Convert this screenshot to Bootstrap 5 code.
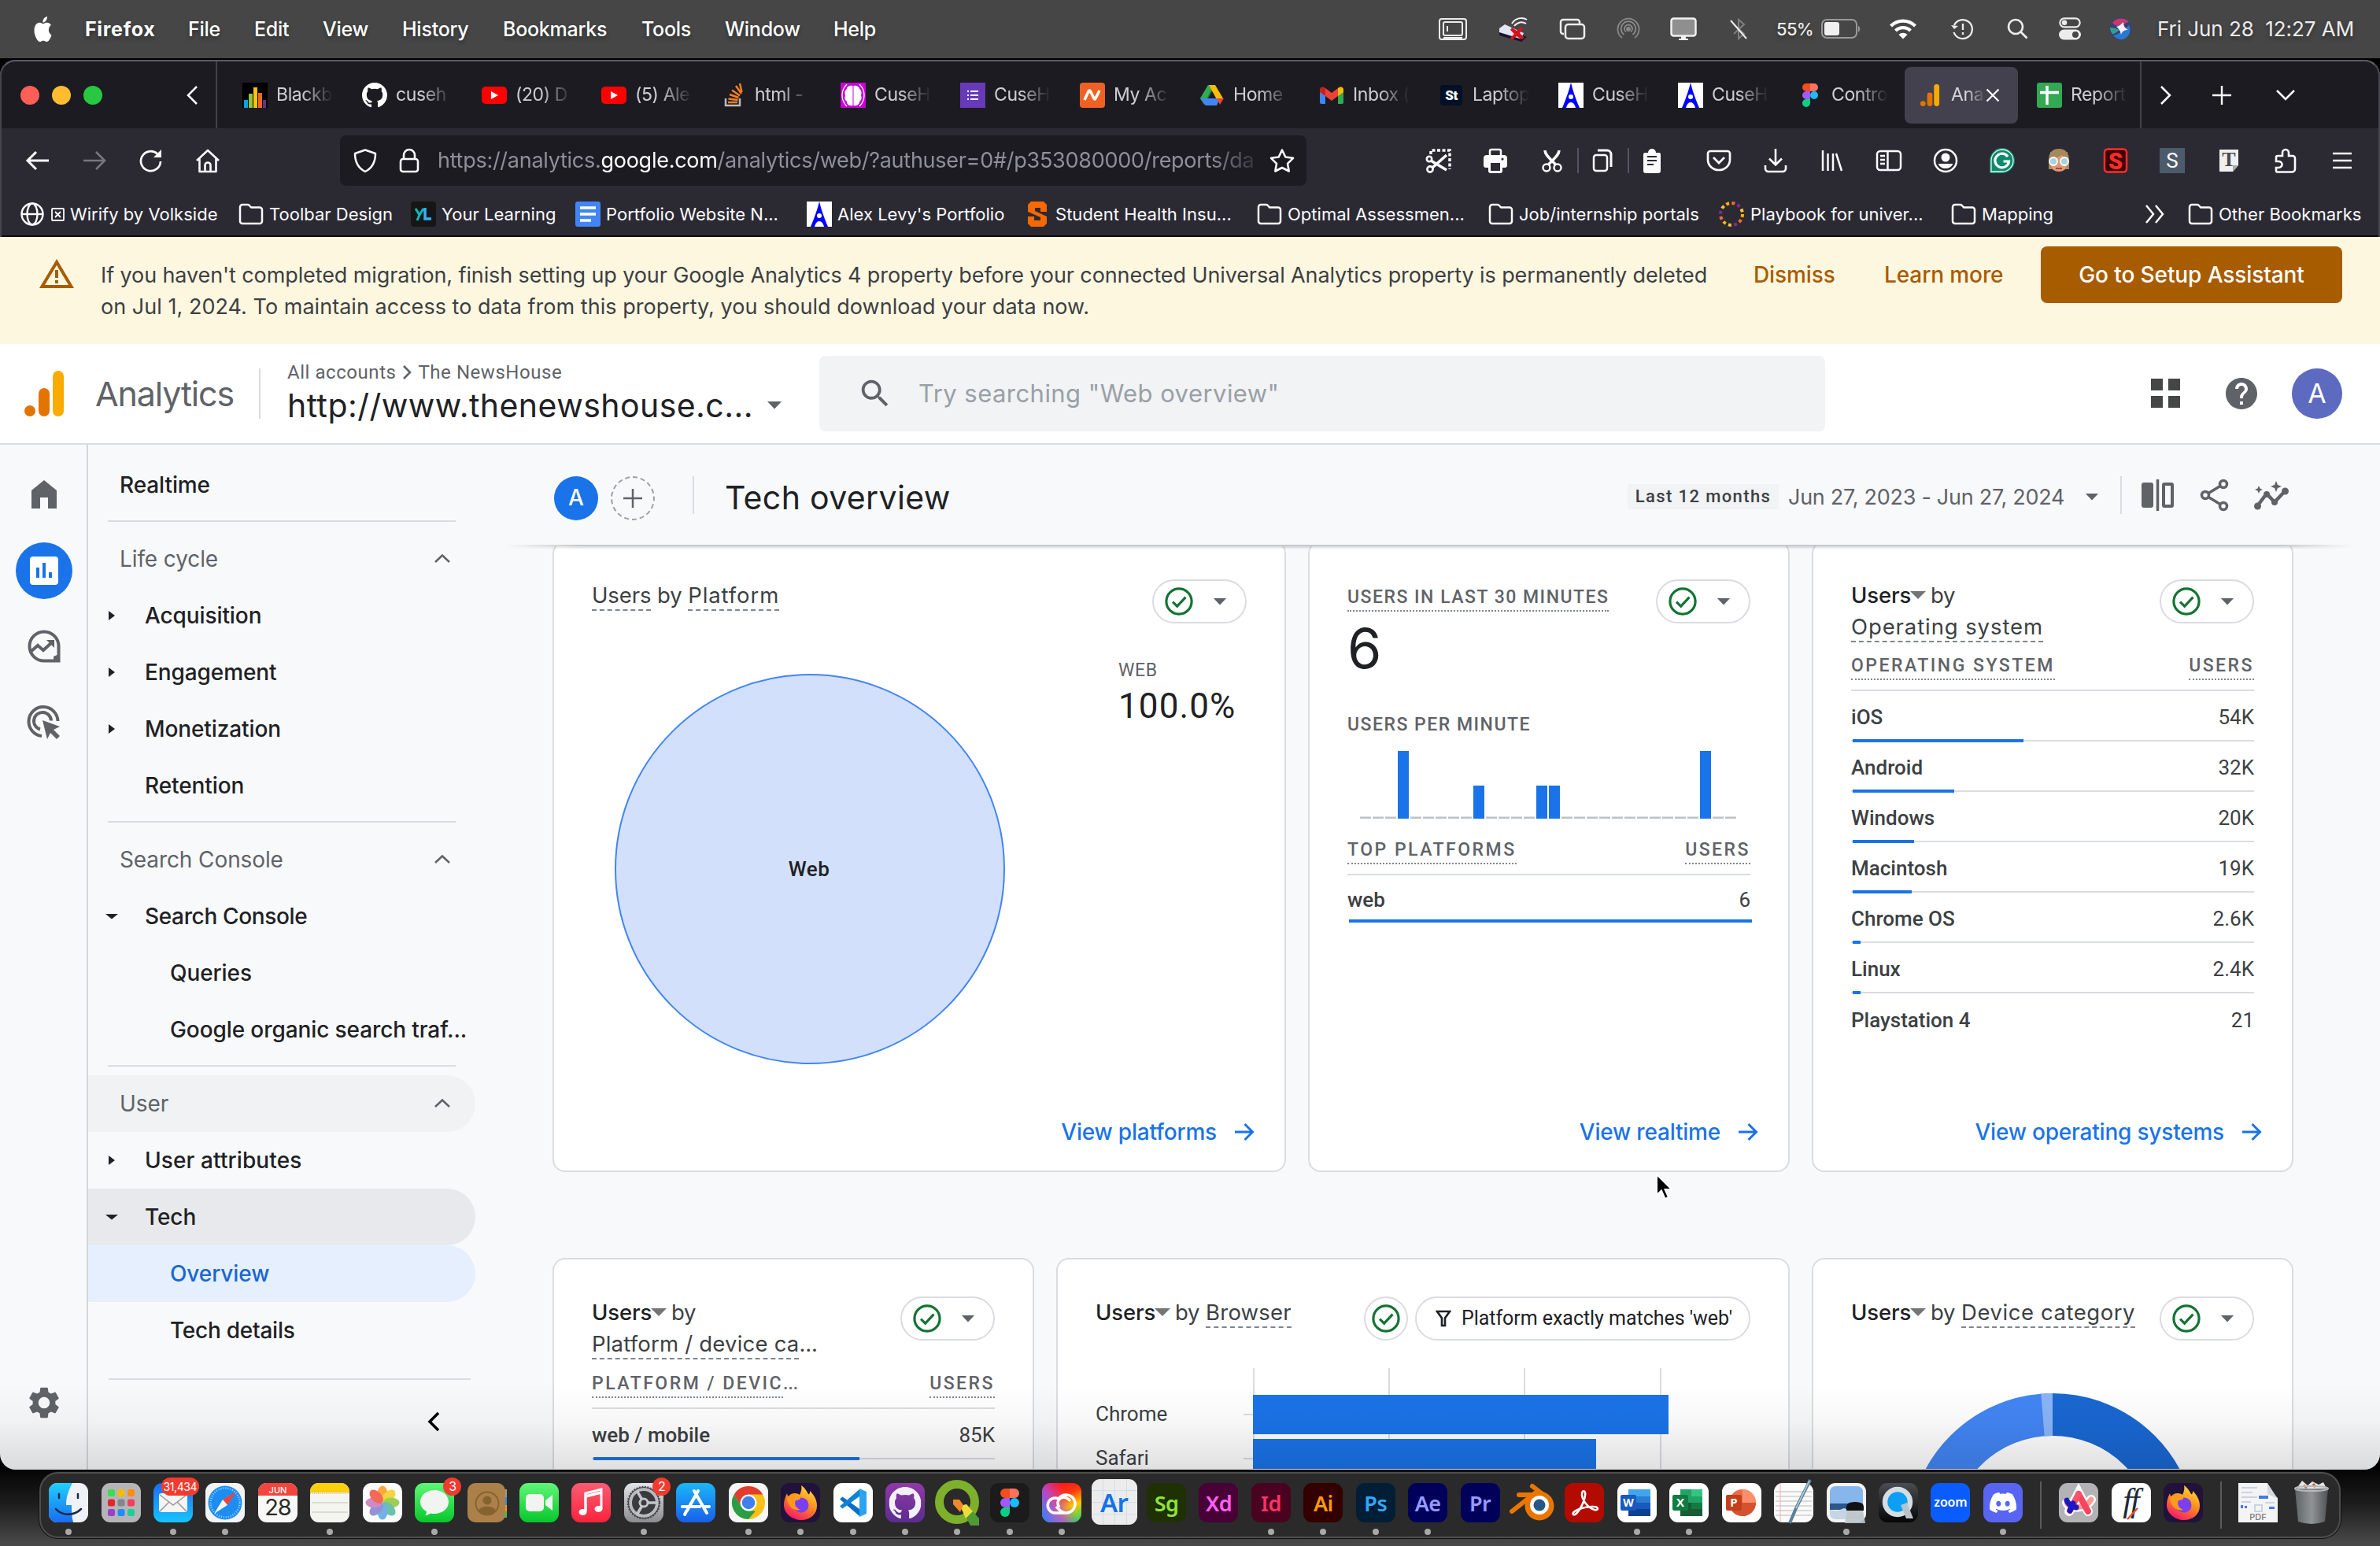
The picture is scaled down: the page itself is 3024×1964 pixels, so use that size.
<!DOCTYPE html>
<html lang="en">
<head>
<meta charset="utf-8">
<title>Tech overview - Analytics</title>
<link rel="stylesheet" href="https://cdn.jsdelivr.net/npm/bootstrap@5.3.0/dist/css/bootstrap.min.css">
<script src="https://cdn.jsdelivr.net/npm/bootstrap@5.3.0/dist/js/bootstrap.bundle.min.js"></script>
<style>
html,body{width:3024px;height:1964px;overflow:hidden}
body{background:#000;font-family:Inter,"Liberation Sans",sans-serif;color:#202124;line-height:1.3}
svg{display:block;flex:none}
.rb{font-family:Roboto,"Liberation Sans",sans-serif}
.slot{display:flex;align-items:center;justify-content:center;flex:none}

/* menu bar */
.menubar{height:74px;background:#464646;color:#fff;font-size:25px;font-weight:500;letter-spacing:-.25px;text-shadow:0 3px 5px rgba(0,0,0,.35)}
.menubar .mi{flex:none;white-space:nowrap}
.menus .mi:nth-child(1){width:70px;padding-left:41px}
.menus .mi:nth-child(2){width:131px;font-weight:700;margin-left:38px;letter-spacing:.7px}
.menus .mi:nth-child(3){width:84px}.menus .mi:nth-child(4){width:87px}.menus .mi:nth-child(5){width:101px}
.menus .mi:nth-child(6){width:128px}.menus .mi:nth-child(7){width:176px}.menus .mi:nth-child(8){width:106px}.menus .mi:nth-child(9){width:138px}
.status{width:1217px;color:#ececec}
.status .slot:nth-child(1){width:78px}.status .slot:nth-child(2){width:76px}.status .slot:nth-child(3){width:73px}
.status .slot{width:70px}
.status .batt{width:134px;justify-content:flex-start;padding-left:13px;font-size:22px;letter-spacing:-.7px;gap:10px}
.status .w80{width:80px}.status .w64{width:64px}
.clock{padding-left:15px;font-size:26px;white-space:pre;letter-spacing:-.05px;font-weight:400}

/* browser window */
.ff{height:1791px;margin-top:2px;border-radius:20px;overflow:hidden;background:#f8f9fb;position:relative;flex:none}
.ff-edge{position:absolute;inset:0;border:2px solid #5d5c63;border-bottom:0;border-radius:20px 20px 0 0;height:225px;border-left-color:#46454d;border-right-color:#46454d;pointer-events:none}
.tabs{height:87px;background:#1c1b22;color:#fbfbfe;padding-top:2px}
.lights{width:276px;border-right:2px solid #42414a;height:100%;padding-left:26px;padding-right:17px;gap:16px}
.lights i{width:24px;height:24px;border-radius:50%}
.tab{width:144px;height:72px;margin:0 4px;padding-left:16px;gap:11px;border-radius:8px;flex:none;font-size:23px;letter-spacing:-.4px;color:#fbfbfe}
.tab .tt{width:72px;white-space:nowrap;opacity:.8;-webkit-mask-image:linear-gradient(90deg,#000 45%,transparent 100%);mask-image:linear-gradient(90deg,#000 45%,transparent 100%)}
.tab.live{background:#42414d}
.tab.live .tt{width:44px}
.tabs-end{border-left:2px solid #42414a;height:100%;margin-left:-1px}
.tools{height:82px;background:#2b2a33;color:#fbfbfe;padding-left:12px}
.tools .slot{width:72px}
.urlbar{width:1228px;height:64px;background:#1c1b22;border-radius:8px;margin:0 132px;padding-left:16px;flex:none}
.urlbar .addr{width:1044px;margin-left:20px;margin-right:12px;font-size:27px;letter-spacing:-.27px;color:#8f8f9a;white-space:nowrap;-webkit-mask-image:linear-gradient(90deg,#000 94%,transparent 101%);mask-image:linear-gradient(90deg,#000 94%,transparent 101%)}
.urlbar b{color:#fbfbfe;font-weight:400}
.vr2{width:2px;height:32px;background:#55545f;flex:none}
.tools .w68{width:68px}.tools .w62{width:62px}.tools .w58{width:58px;margin-right:20px}
.marks{height:56px;background:#2b2a33;color:#fbfbfe;font-size:22px;letter-spacing:.02px;padding-left:26px;border-bottom:2px solid #0c0c0d}
.bm{display:flex;align-items:center;gap:7px;flex:none;white-space:nowrap}
.bm:nth-child(1){width:277px}.bm:nth-child(2){width:219px}.bm:nth-child(3){width:209px}.bm:nth-child(4){width:294px}
.bm:nth-child(5){width:278px}.bm:nth-child(6){width:294px}.bm:nth-child(7){width:294px}.bm:nth-child(8){width:292px}
.bm:nth-child(9){width:296px}.bm:nth-child(10){width:246px}.bm:nth-child(11){width:55px}

/* migration banner */
.notice{height:136px;background:#fef7e0;color:#3c4043;font-size:27px;line-height:40px;letter-spacing:-.105px;padding:12px 48px 0 49px}
.notice .msg{width:2060px;margin:17px 0 0 33px;white-space:nowrap}
.notice .msg span{letter-spacing:.03px}
.notice .act{color:#a85c00;font-weight:500;margin-top:16px;font-size:28px;letter-spacing:-.1px}
.notice .go{background:#a85c00;color:#fff;width:383px;height:72px;border-radius:8px;font-weight:500;font-size:28px;letter-spacing:-.1px;padding:0;border:0}

/* product header */
.gahead{height:128px;background:#fff;border-bottom:2px solid #dadce0;padding-left:31px}
.prod{font-size:43px;color:#5f6368;letter-spacing:-1.15px;width:208px;margin-left:40px;margin-top:2px}
.crumb{font-size:24px;color:#5f6368;letter-spacing:.55px;line-height:32px;gap:8px;padding-top:2px}
.acct{font-size:41px;line-height:50px;letter-spacing:.45px;width:609px;padding-top:1px}
.find{width:1278px;height:96px;border-radius:8px;background:#f1f3f4;color:#9aa0a6;font-size:31px;letter-spacing:.45px;padding-left:48px;gap:32px}
.avatar{border-radius:50%;color:#fff;display:flex;align-items:center;justify-content:center}
.me{width:64px;height:64px;background:#5c6bc0;font-size:34px}

/* left rail and report navigation */
.rail{width:112px;border-right:2px solid #d5d7da;color:#5f6368;flex:none;padding-top:28px}
.rail .ri{height:72px;width:72px;margin:0 auto 24px 20px;display:flex;align-items:center;justify-content:center;flex:none;border-radius:50%}
.rail .sel{background:#1a73e8;color:#fff}
.rail .cog{margin-top:769px}
.rnav{width:530px;font-size:28px;font-weight:500;letter-spacing:-.1px;padding-top:15px;flex:none}
.nl{height:72px;width:492px;border-radius:0 36px 36px 0;display:flex;align-items:center;padding-left:72px;position:relative;white-space:nowrap}
.nl.sec{padding-left:40px;color:#5f6368;font-weight:400}
.nl.sec svg{margin-left:auto;margin-right:31px}
.nl.sub{padding-left:104px}
.nl.top1{padding-left:40px}
.nl .tw{width:16px;position:absolute;left:22px}
.ndiv{height:2px;background:#dadce0;width:442px;margin:9px 0 11px 25px}
.hov1{background:#f1f2f4}.hov2{background:#e8e9ec}.cur{background:#e6effd;color:#1967d2}

/* report area */
.rhead{height:129px;padding-left:62px;position:relative;z-index:2;flex:none}
.rhead:after{content:"";position:absolute;left:0;right:34px;bottom:-4px;height:6px;background:linear-gradient(90deg,transparent,rgba(60,64,67,.3) 4%,rgba(60,64,67,.3) 96%,transparent);-webkit-mask-image:linear-gradient(#000,transparent);mask-image:linear-gradient(#000,transparent)}
.addc{width:56px;height:56px;border:2px dashed #9aa0a6;border-radius:50%}
.rt{font-size:41px;letter-spacing:.35px;margin-left:39px}
.last{background:#f1f3f4;font-size:22px;font-weight:500;letter-spacing:1.4px;width:192px;height:32px;color:#3c4043;white-space:nowrap}
.dates{font-size:27px;color:#5f6368;letter-spacing:-.27px;margin-left:12px;width:377px;white-space:nowrap}
.cards{padding-left:60px;overflow:hidden;height:1172px}
.crow{gap:28px}
.crow.r1{margin-top:-7px;height:802px}
.crow.r2{margin-top:109px;height:700px}
.gc{background:#fff;border:2px solid #dadce0;border-radius:16px;width:612px;padding:47px 48px 29px;display:flex;flex-direction:column;flex:none}
.gc.wide{width:932px}
.ct{font-size:27.5px;line-height:40px;letter-spacing:-.1px;color:#3c4043;white-space:nowrap}
.ct b{font-weight:500;color:#202124}
.ct .tv{display:inline-block;width:20px;height:10px;vertical-align:middle;margin:-6px -2px 0 -1px}
.dl{display:inline-block;line-height:36px;border-bottom:2px dashed #80868b}
.dl.l1{letter-spacing:.2px}.dl.l2{letter-spacing:.55px}.dl.l3{letter-spacing:.9px}
.chk{height:56px;border:2px solid #dadce0;border-radius:28px;display:flex;align-items:center;justify-content:center;flex:none;background:#fff}
.chk.d{width:120px;gap:25px;padding-left:14px;justify-content:flex-start}
.cap{font-size:23px;line-height:32px;color:#5f6368;letter-spacing:1.5px;font-weight:500;white-space:nowrap}
.cap .ul{display:inline-block;border-bottom:2px dotted #80868b}
.thead2{border-bottom:2px solid #dadce0;height:48px;display:flex;justify-content:space-between}
.cap.wd{letter-spacing:2.5px}
.tr2{height:64px;border-bottom:2px solid #dadce0;display:flex;align-items:center;justify-content:space-between;font-size:26px;color:#3c4043;position:relative;flex:none;padding-top:5px}
.tr2 span:first-child{font-weight:500}
.tr2 i{position:absolute;left:2px;bottom:-3px;height:4px;background:#1a73e8}
.more{margin-top:auto;display:flex;align-items:center;justify-content:flex-end;gap:22px;margin-right:-10px;color:#1a73e8;font-size:28px;font-weight:500;letter-spacing:-.2px;line-height:40px}
.fade-b{position:absolute;left:0;right:0;bottom:0;height:110px;background:linear-gradient(rgba(0,0,0,0),rgba(0,0,0,.03) 45%,rgba(0,0,0,.12));pointer-events:none;z-index:4}
.ptr{position:absolute;left:2103px;top:1414px;z-index:5}

/* dock */
.under{flex:1;background:linear-gradient(#050505,#1d1d1d 45%,#484848 96%);padding:3px 50px 0}
.dock{height:84px;background:#2a2a2a;border:2px solid #4e4e4e;border-radius:24px;padding:0 0 0 2px;box-shadow:0 0 0 1px #111}
.app{width:66.43px;height:80px;flex:none;display:flex;justify-content:center;padding-top:12px;position:relative}
.app.on:after{content:"";position:absolute;bottom:2px;width:8px;height:8px;border-radius:50%;background:#a9a9a9}
.tile{width:50px;height:50px;border-radius:11px;display:flex;align-items:center;justify-content:center;font-family:"Noto Sans","Open Sans",sans-serif;font-weight:600;font-size:27px;letter-spacing:-.5px;line-height:1}
.t-ar{width:58px;height:58px;margin-top:-5px;font-size:33px;color:#1473e6;background:repeating-linear-gradient(90deg,transparent 0 14px,#cfdcea 14px 15px),repeating-linear-gradient(#ececec 0 14px,#cfdcea 14px 15px)}
.t-sg{background:#1f3003;color:#8fe33a}.t-xd{background:#470137;color:#ff61f6}.t-id{background:#49021f;color:#ff3366}
.t-ai{background:#330000;color:#ff9a00}.t-ps{background:#001e36;color:#31a8ff}.t-ae,.t-pr{background:#00005b;color:#9999ff}
.t-zoom{background:#0b5cff;color:#fff;font-size:16px;letter-spacing:-.2px;padding-bottom:3px}
.cnt{position:absolute;background:#f23b30;color:#fff;border-radius:12px;font-size:16px;line-height:23px;height:23px;min-width:23px;text-align:center;top:5px;right:-1px;letter-spacing:-.4px}
.cnt.big{padding:0 3px;right:0;top:5px;font-size:14px}
.dsep{width:2px;height:60px;background:#5b5b5b;margin:0 14px;flex:none}
</style>
</head>
<body class="d-flex flex-column">
<svg width="0" height="0" class="position-absolute">
<defs>
<linearGradient id="gBlue" x1="0" y1="0" x2="0" y2="1"><stop offset="0" stop-color="#1fd0ff"/><stop offset="1" stop-color="#1a6cf0"/></linearGradient>
<linearGradient id="gMail" x1="0" y1="0" x2="0" y2="1"><stop offset="0" stop-color="#1b6cf5"/><stop offset="1" stop-color="#16c5fb"/></linearGradient>
<linearGradient id="gGreen" x1="0" y1="0" x2="0" y2="1"><stop offset="0" stop-color="#5ff777"/><stop offset="1" stop-color="#08c62b"/></linearGradient>
<linearGradient id="gRed" x1="0" y1="0" x2="0" y2="1"><stop offset="0" stop-color="#fb5c74"/><stop offset="1" stop-color="#fa233b"/></linearGradient>
<linearGradient id="gStore" x1="0" y1="0" x2="0" y2="1"><stop offset="0" stop-color="#1ab7f8"/><stop offset="1" stop-color="#1a5fe8"/></linearGradient>
<linearGradient id="gFox" x1=".8" y1="0" x2=".3" y2="1"><stop offset="0" stop-color="#ffe23a"/><stop offset=".5" stop-color="#ff8a1c"/><stop offset="1" stop-color="#f5156c"/></linearGradient>
<linearGradient id="gCC" x1=".3" y1="0" x2=".7" y2="1"><stop offset="0" stop-color="#ff0f1a"/><stop offset=".35" stop-color="#ff3a10"/><stop offset=".65" stop-color="#ffc400"/><stop offset="1" stop-color="#3fd85a"/></linearGradient>
<linearGradient id="gCC2" x1="1" y1=".3" x2="0" y2=".8"><stop offset=".3" stop-color="#c13bd8" stop-opacity="0"/><stop offset=".65" stop-color="#b44be0" stop-opacity=".8"/><stop offset="1" stop-color="#3b7bff"/></linearGradient>
<linearGradient id="gGray" x1="0" y1="0" x2="0" y2="1"><stop offset="0" stop-color="#e3e5e8"/><stop offset="1" stop-color="#8c8c90"/></linearGradient>
<linearGradient id="gQt" x1="0" y1="0" x2="0" y2="1"><stop offset="0" stop-color="#4a4d52"/><stop offset="1" stop-color="#050505"/></linearGradient>
<linearGradient id="gGit" x1="0" y1="0" x2="0" y2="1"><stop offset="0" stop-color="#8f3aa8"/><stop offset="1" stop-color="#5b2d8e"/></linearGradient>
<linearGradient id="gBin" x1="0" y1="0" x2="1" y2="0"><stop offset="0" stop-color="#5f6366"/><stop offset=".5" stop-color="#8f9497"/><stop offset="1" stop-color="#505356"/></linearGradient>
<symbol id="folder" viewBox="0 0 32 32"><path d="M2 7a3 3 0 0 1 3-3h6.500c1 0 1.700.3 2.300 1l2.400 2.600H27a3 3 0 0 1 3 3V25a3 3 0 0 1-3 3H5a3 3 0 0 1-3-3z" fill="none" stroke="#fbfbfe" stroke-width="2.500"/></symbol>
<symbol id="amark" viewBox="0 0 32 32"><path fill="#fff" d="M0 0h32v32H0z"/><path fill="#00f" fill-rule="evenodd" d="M16 0c2 8 5 18 11 32h-5c-1-4-3-7-6-7s-5 3-6 7H5C11 18 14 8 16 0zm0 15a3 3 0 1 0 0 6 3 3 0 0 0 0-6z"/></symbol>
<symbol id="yt" viewBox="0 0 32 32"><rect y="5" width="32" height="22" rx="5" fill="red"/><path fill="#fff" d="m12 11 9 5-9 5z"/></symbol>
<symbol id="github" viewBox="0 0 16 16"><path d="M8 0C3.58 0 0 3.58 0 8c0 3.54 2.29 6.53 5.47 7.59.4.07.55-.17.55-.38 0-.19-.01-.82-.01-1.49-2.01.37-2.53-.49-2.69-.94-.09-.23-.48-.94-.82-1.13-.28-.15-.68-.52-.01-.53.63-.01 1.08.58 1.23.82.72 1.21 1.87.87 2.33.66.07-.52.28-.87.51-1.07-1.78-.2-3.64-.89-3.64-3.95 0-.87.31-1.59.82-2.15-.08-.2-.36-1.02.08-2.12 0 0 .67-.21 2.2.82.64-.18 1.32-.27 2-.27s1.36.09 2 .27c1.53-1.04 2.2-.82 2.2-.82.44 1.1.16 1.92.08 2.12.51.56.82 1.27.82 2.15 0 3.07-1.87 3.75-3.65 3.95.29.25.54.73.54 1.48 0 1.07-.01 1.93-.01 2.2 0 .21.15.46.55.38A8.01 8.01 0 0 0 16 8c0-4.42-3.58-8-8-8z"/></symbol>
<symbol id="figma" viewBox="0 0 32 48"><path fill="#f24e1e" d="M16 0H8a8 8 0 0 0 0 16h8z"/><path fill="#ff7262" d="M16 0h8a8 8 0 0 1 0 16h-8z"/><path fill="#a259ff" d="M16 16H8a8 8 0 0 0 0 16h8z"/><circle cx="24" cy="24" r="8" fill="#1abcfe"/><path fill="#0acf83" d="M8 32h8v8a8 8 0 1 1-8-8z"/></symbol>
<symbol id="ga" viewBox="0 0 50 58"><rect x="36" width="14" height="58" rx="7" fill="#f9ab00"/><rect x="18" y="22" width="14" height="36" rx="7" fill="#e37400"/><circle cx="7" cy="51" r="7" fill="#e37400"/></symbol>
<symbol id="ok" viewBox="0 0 34 34"><circle cx="17" cy="17" r="15.200" fill="none" stroke="#137333" stroke-width="3"/><path d="m9.500 17.500 5.300 5.300L25 12" fill="none" stroke="#137333" stroke-width="3"/></symbol>
<symbol id="dn" viewBox="0 0 20 10"><path d="M1 0h18l-9 9.500z" fill="#5f6368"/></symbol>
<symbol id="tri" viewBox="0 0 20 10"><path d="M0 0h20l-10 10z" fill="#757575"/></symbol>
<symbol id="up" viewBox="0 0 22 14"><path d="m2 11 9-8.500L20 11" fill="none" stroke="#5f6368" stroke-width="2.500"/></symbol>
<symbol id="right" viewBox="0 0 16 16"><path d="m4 2 8 6-8 6z" fill="#202124"/></symbol>
<symbol id="down" viewBox="0 0 16 16"><path d="M0 5h16l-8 6.500z" fill="#202124"/></symbol>
<symbol id="arrow" viewBox="0 0 26 26"><path d="M1 13h22M13.500 3l10 10-10 10" fill="none" stroke="#1a73e8" stroke-width="3"/></symbol>
<symbol id="fox" viewBox="0 0 50 50"><rect width="50" height="50" rx="11" fill="#20123a"/><path fill="url(#gFox)" d="M26 3c6 4 7 8 9 11 2 1 2-2 2-4 6 6 9 12 9 19 0 11-9 18-20 18S4 39 4 28c0-6 2-11 4-15 0 2 1 3 2 4 2-3 4-4 8-4 3 0 5 1 6 2 2-4 3-8 2-12z"/><circle cx="26" cy="28" r="9.500" fill="#7b3ff2"/><path fill="#ff9a1f" d="M8 18c5-3 11-3 17 0 1 2-2 4-6 4-2 4-1 9 6 12-8 2-17-4-17-16z"/></symbol>
</defs>
</svg>

<header class="menubar d-flex align-items-center flex-shrink-0">
  <nav class="menus d-flex align-items-center">
    <span class="mi"><svg width="27" height="32" viewBox="0 0 16 16" preserveAspectRatio="none" fill="#fff"><path d="M11.182.008C11.148-.03 9.923.023 8.857 1.180c-1.066 1.156-.902 2.482-.878 2.516s1.520.087 2.475-1.258.762-2.391.728-2.430m3.314 11.733c-.048-.096-2.325-1.234-2.113-3.422s1.675-2.789 1.698-2.854-.597-.79-1.254-1.157a3.700 3.700 0 0 0-1.563-.434c-.108-.003-.483-.095-1.254.116-.508.139-1.653.589-1.968.607-.316.018-1.256-.522-2.267-.665-.647-.125-1.333.131-1.824.328-.49.196-1.422.754-2.074 2.237-.652 1.482-.311 3.830-.067 4.560s.625 1.924 1.273 2.796c.576.984 1.340 1.667 1.659 1.899s1.219.386 1.843.067c.502-.308 1.408-.485 1.766-.472.357.013 1.061.154 1.782.539.571.197 1.111.115 1.652-.105.541-.221 1.324-1.059 2.238-2.758q.52-1.185.473-1.282"/></svg></span>
    <span class="mi">Firefox</span><span class="mi">File</span><span class="mi">Edit</span><span class="mi">View</span><span class="mi">History</span><span class="mi">Bookmarks</span><span class="mi">Tools</span><span class="mi">Window</span><span class="mi">Help</span>
  </nav>
  <div class="status d-flex align-items-center ms-auto flex-shrink-0">
    <span class="slot"><svg width="36" height="28" viewBox="0 0 36 28" fill="none" stroke="#ececec" stroke-width="2"><rect x="1" y="1" width="34" height="26" rx="3"/><rect x="6" y="5" width="24" height="17" rx="2"/><path d="M11 10v7M6 25h24"/></svg></span>
    <span class="slot"><svg width="38" height="32" viewBox="0 0 38 32"><path d="M1 15 8 10l24 11-4 9-27-8z" fill="#e3e5f2"/><path d="M1 20l26 8 4-4 5 2-7 6L1 24z" fill="#15172c"/><path d="M17 9c4-7 13-9 19-5M20 12c4-5 10-6 15-3" fill="none" stroke="#f2f2f2" stroke-width="2"/><path d="m17 14 6 4 6-5 2 3-4 5 6 6-4 2-6-4-6 5-2-3 5-5-5-5z" fill="#d8101e"/></svg></span>
    <span class="slot"><svg width="34" height="28" viewBox="0 0 34 28" fill="none" stroke="#ececec" stroke-width="2.500"><path d="M6 20H5a3 3 0 0 1-3-3V5a3 3 0 0 1 3-3h18a3 3 0 0 1 3 3v2"/><rect x="8" y="8" width="24" height="18" rx="3.500"/></svg></span>
    <span class="slot"><svg width="30" height="30" viewBox="0 0 30 30" fill="none" stroke="#8a8a8a" stroke-width="1.800"><path d="M7 26a13.500 13.500 0 1 1 16 0M9.500 22a9.300 9.300 0 1 1 11 0M12 18.500a5 5 0 1 1 6 0"/><circle cx="15" cy="15" r="2" fill="#8a8a8a"/></svg></span>
    <span class="slot"><svg width="34" height="30" viewBox="0 0 34 30"><rect x="1.500" y="1.500" width="31" height="22" rx="3" fill="#8f8f8f" stroke="#f0f0f0" stroke-width="2.500"/><path fill="#f0f0f0" d="M14 24h6v3h3v2H11v-2h3z"/></svg></span>
    <span class="slot"><svg width="24" height="30" viewBox="0 0 24 30" fill="none"><path d="m6 9 13 12-7 6V3l7 6L6 21" stroke="#808080" stroke-width="2"/><path d="m2 4 20 23" stroke="#ececec" stroke-width="2"/></svg></span>
    <span class="slot batt">55%<svg width="50" height="26" viewBox="0 0 50 26"><rect x="1" y="1" width="44" height="23" rx="6" fill="none" stroke="#999" stroke-width="2"/><rect x="4" y="4" width="19" height="17" rx="3" fill="#f0f0f0"/><path d="M47 9c3 1 3 6 0 8z" fill="#999"/></svg></span>
    <span class="slot w80"><svg width="36" height="27" viewBox="0 0 36 27" fill="none" stroke="#fff" stroke-width="4.200"><path d="M2.500 10a22 22 0 0 1 31 0M8.500 16a13.500 13.500 0 0 1 19 0"/><path d="M18 26.500 12.500 21a8 8 0 0 1 11 0z" fill="#fff" stroke="none"/></svg></span>
    <span class="slot"><svg width="30" height="28" viewBox="0 0 30 28" fill="none" stroke="#ececec" stroke-width="2.300"><path d="M5 9a12 12 0 1 1-.5 9"/><path d="m1 9 4 5 5-4z" fill="#ececec" stroke="none"/><path d="M16 7v8M16 18v3"/></svg></span>
    <span class="slot"><svg width="27" height="27" viewBox="0 0 27 27" fill="none" stroke="#ececec" stroke-width="2.700"><circle cx="11" cy="11" r="9"/><path d="m17.500 17.500 8 8"/></svg></span>
    <span class="slot w64"><svg width="28" height="29" viewBox="0 0 28 29"><rect x="1.300" y="1.300" width="25.400" height="11" rx="5.500" fill="none" stroke="#ececec" stroke-width="2.200"/><circle cx="7" cy="6.800" r="3.300" fill="#ececec"/><rect y="15.500" width="28" height="13" rx="6.500" fill="#ececec"/><circle cx="21" cy="22" r="4" fill="#464646"/></svg></span>
    <span class="slot w64"><svg width="29" height="29" viewBox="0 0 29 29"><circle cx="14.500" cy="14.500" r="14" fill="#39406e"/><path d="M4 7C9 0 20 0 25 6c-5 1-10 5-14 5-3 0-5-2-7-4z" fill="#c33a72"/><path d="M5 23c5-1 12-5 20-13 4 8 0 15-7 18-5 1-10-1-13-5z" fill="#2a78d0"/><path d="M1 13c4 0 8 1 12 3-4 3-7 6-9 5-2-2-3-5-3-8z" fill="#2f9f95"/><path d="M9 12c4-1 7-4 9-6 0 5 2 8 6 10-5 0-8 2-9 6-1-5-3-8-6-10z" fill="#f5f1ff"/></svg></span>
    <span class="clock">Fri Jun 28  12:27 AM</span>
  </div>
</header>

<main class="ff d-flex flex-column">
  <div class="tabs d-flex align-items-center flex-shrink-0">
    <div class="lights d-flex align-items-center flex-shrink-0"><i style="background:#ff5f57"></i><i style="background:#febc2e"></i><i style="background:#28c840"></i>
      <svg class="ms-auto" width="24" height="26" viewBox="0 0 24 26" fill="none" stroke="#fbfbfe" stroke-width="2.500"><path d="M17 2 6 13l11 11"/></svg></div>
    <div class="d-flex align-items-center" style="margin-left:12px">
      <div class="tab d-flex align-items-center"><svg width="32" height="32" viewBox="0 0 32 32"><path d="M0 0h32v32H0z"/><path fill="#00a4e4" d="M2 22h5v10H2z"/><path fill="#8cc63f" d="M8 14h5v18H8z"/><path fill="#ffc20e" d="M14 6h5v26h-5z"/><path fill="#f26522" d="M20 13h5v19h-5z"/><path fill="#662d91" d="M26 22h4v10h-4z"/></svg><span class="tt">Blackb</span></div>
      <div class="tab d-flex align-items-center"><svg width="32" height="32" fill="#fff"><use href="#github"/></svg><span class="tt">cuseh</span></div>
      <div class="tab d-flex align-items-center"><svg width="32" height="32"><use href="#yt"/></svg><span class="tt">(20) D</span></div>
      <div class="tab d-flex align-items-center"><svg width="32" height="32"><use href="#yt"/></svg><span class="tt">(5) Ale</span></div>
      <div class="tab d-flex align-items-center"><svg width="32" height="32" viewBox="0 0 32 32" fill="none" stroke-width="2.500"><path stroke="#bcbbbb" d="M6 20v9h18v-9"/><path stroke="#f48024" d="M9 25h12M9.500 20.500l12 1.500M11 15l11.500 4M14 9.500l10 7M19 4l7 10M24 1l2.500 11"/></svg><span class="tt">html -</span></div>
      <div class="tab d-flex align-items-center"><svg width="32" height="32" viewBox="0 0 32 32"><path fill="#c800d7" d="M0 0h32v32H0z"/><path fill="#fff" d="M15.500 4v25C10 30 8 27 8 24c-3-2-3-5-2-8-1-3-1-6 2-8 0-3 4-5 7.500-4zM16.500 4v25c5.500 1 7.500-2 7.500-5 3-2 3-5 2-8 1-3 1-6-2-8 0-3-4-5-7.500-4z"/><path d="M8 2c-8 8-8 20 0 28M24 2c8 8 8 20 0 28" stroke="#fff" stroke-width="1.300" fill="none"/></svg><span class="tt">CuseH</span></div>
      <div class="tab d-flex align-items-center"><svg width="32" height="32" viewBox="0 0 32 32"><path fill="#673ab7" d="M0 0h32v32H0z"/><path d="M9 11h2M9 16h2M9 21h2M13 11h10M13 16h10M13 21h10" stroke="#fff" stroke-width="2"/></svg><span class="tt">CuseH</span></div>
      <div class="tab d-flex align-items-center"><svg width="32" height="32" viewBox="0 0 32 32"><rect width="32" height="32" rx="4" fill="#ee6123"/><path d="M6 22l5-11q1-2 2.500 0l4.500 9q1 2 2 0l5-10" fill="none" stroke="#fff" stroke-width="3.500"/></svg><span class="tt">My Ac</span></div>
      <div class="tab d-flex align-items-center"><svg width="32" height="32" viewBox="0 0 32 32"><path fill="#188038" d="M11 3h5l3 5-7 13-6 7-5-8z"/><path fill="#34a853" d="M11 3h6l-2 6L6 27l-5-7z"/><path fill="#fbbc04" d="M12 3h8l10 17h-9z"/><path fill="#1c1b22" d="m16 11 5 9H11z"/><path fill="#4285f4" d="M6 20h20l-4 9H9q-2 0-3-2l-5-7z"/><path fill="#ea4335" d="M22 20h9l-5 8z"/></svg><span class="tt">Home</span></div>
      <div class="tab d-flex align-items-center"><svg width="32" height="32" viewBox="0 0 32 32"><path fill="#4285f4" d="M1 8l7 5v14H3q-2 0-2-2z"/><path fill="#34a853" d="M31 8l-7 5v14h5q2 0 2-2z"/><path fill="#fbbc04" d="M24 7c4-3 7-1 7 2v3l-7 5z"/><path fill="#c5221f" d="M8 7C4 4 1 6 1 9v3l7 5z"/><path fill="#ea4335" d="M8 7l8 6 8-6v10l-8 6-8-6z"/></svg><span class="tt">Inbox (</span></div>
      <div class="tab d-flex align-items-center"><svg width="32" height="32" viewBox="0 0 32 32"><rect x="2" y="3" width="28" height="26" rx="4" fill="#001127"/><text x="16" y="22" font-family="Roboto" font-weight="900" font-size="17" fill="#fff" text-anchor="middle">St</text></svg><span class="tt">Laptop</span></div>
      <div class="tab d-flex align-items-center"><svg width="32" height="32"><use href="#amark"/></svg><span class="tt">CuseH</span></div>
      <div class="tab d-flex align-items-center"><svg width="32" height="32"><use href="#amark"/></svg><span class="tt">CuseH</span></div>
      <div class="tab d-flex align-items-center"><svg width="32" height="30"><use href="#figma"/></svg><span class="tt">Contro</span></div>
      <div class="tab live d-flex align-items-center"><svg width="32" height="28"><use href="#ga"/></svg><span class="tt">Ana</span><svg width="18" height="18" viewBox="0 0 18 18" stroke="#fbfbfe" stroke-width="2.200" style="margin-left:-11px"><path d="m1.500 1.500 15 15M16.500 1.500l-15 15"/></svg></div>
      <div class="tab d-flex align-items-center"><svg width="32" height="32" viewBox="0 0 32 32"><rect width="32" height="32" rx="3" fill="#34a853"/><path d="M13 4v24M4 12.500h24" stroke="#fff" stroke-width="3.500"/></svg><span class="tt">Report</span></div>
    </div>
    <div class="tabs-end d-flex align-items-center"><span class="slot" style="width:61px"><svg width="24" height="26" viewBox="0 0 24 26" fill="none" stroke="#fbfbfe" stroke-width="2.500"><path d="m6 2 11 11L6 24"/></svg></span><span class="slot" style="width:82px"><svg width="26" height="26" viewBox="0 0 26 26" stroke="#fbfbfe" stroke-width="2.400"><path d="M13 1v24M1 13h24"/></svg></span><span class="slot" style="width:80px"><svg width="28" height="18" viewBox="0 0 28 18" fill="none" stroke="#fbfbfe" stroke-width="2.500"><path d="m3 3 11 11L25 3"/></svg></span></div>
  </div>

  <div class="tools d-flex align-items-center flex-shrink-0">
    <span class="slot"><svg width="32" height="32" viewBox="0 0 32 32" fill="none" stroke="#fbfbfe" stroke-width="3"><path d="M3 16h27M14 5 3 16l11 11"/></svg></span>
    <span class="slot"><svg width="32" height="32" viewBox="0 0 32 32" fill="none" stroke="#77767f" stroke-width="2.600"><path d="M29 16H2M18 5l11 11-11 11"/></svg></span>
    <span class="slot"><svg width="32" height="32" viewBox="0 0 32 32" fill="none" stroke="#fbfbfe" stroke-width="2.700"><path d="M28 17a12.500 12.500 0 1 1-4-9.500"/><path d="M29 2v10H19z" fill="#fbfbfe" stroke="none"/></svg></span>
    <span class="slot"><svg width="32" height="32" viewBox="0 0 32 32" fill="none" stroke="#fbfbfe" stroke-width="2.600" stroke-linejoin="round"><path d="M2 16 16 3l14 13M5.500 13.500V30h21V13.500M12.500 30v-8a3.500 3.500 0 0 1 7 0v8"/></svg></span>
    <div class="urlbar d-flex align-items-center">
      <svg width="32" height="32" viewBox="0 0 32 32" fill="none" stroke="#fbfbfe" stroke-width="2.500" stroke-linejoin="round"><path d="M16 2.500 3 7c0 10 3 18 13 23 10-5 13-13 13-23z"/></svg>
      <svg width="32" height="32" viewBox="0 0 32 32" fill="none" stroke="#fbfbfe" stroke-width="2.600" style="margin-left:24px"><rect x="5" y="14" width="22" height="16" rx="3"/><path d="M9 14V9a7 7 0 0 1 14 0v5"/></svg>
      <span class="addr">https://analytics.<b>google.com</b>/analytics/web/?authuser=0#/p353080000/reports/da</span>
      <svg width="34" height="32" viewBox="0 0 34 32" fill="none" stroke="#fbfbfe" stroke-width="2.600" stroke-linejoin="round"><path d="m17 2.500 4.300 9 9.700 1.300-7 7 1.700 9.700L17 25l-8.700 4.500L10 19.800l-7-7 9.700-1.300z"/></svg>
    </div>
    <span class="slot"><svg width="34" height="32" viewBox="0 0 34 32" fill="none" stroke="#fbfbfe" stroke-width="2.600"><path d="M7 8V3h24v24" stroke-dasharray="4 2.500" stroke-width="3.500"/><circle cx="5" cy="14" r="3.200"/><circle cx="6" cy="27" r="3.600"/><path d="m7 16 20 12M9 25 27 9" stroke-width="3.600"/></svg></span>
    <span class="slot"><svg width="32" height="32" viewBox="0 0 32 32"><path fill="none" stroke="#fbfbfe" stroke-width="2.500" d="M9 10V4a2 2 0 0 1 2-2h10a2 2 0 0 1 2 2v6"/><path fill="#fbfbfe" fill-rule="evenodd" d="M5 9h22a4 4 0 0 1 4 4v9a3 3 0 0 1-3 3h-3v4a3 3 0 0 1-3 3H10a3 3 0 0 1-3-3v-4H4a3 3 0 0 1-3-3v-9a4 4 0 0 1 4-4zm5 10v10h12V19zm15-6.500a1.600 1.600 0 1 0 0 3.200 1.600 1.600 0 0 0 0-3.200z"/></svg></span>
    <span class="slot w68"><svg width="26" height="30" viewBox="0 0 26 30" fill="none" stroke="#fbfbfe" stroke-width="2.500" style="margin-left:4px"><circle cx="6" cy="24" r="4.500"/><circle cx="20" cy="24" r="4.500"/><path d="M4 2c0 6 7 11 13.500 18M22 2c0 6-7 11-13.500 18" stroke-width="3.500"/></svg></span>
    <span class="vr2"></span>
    <span class="slot w62"><svg width="28" height="30" viewBox="0 0 28 30" fill="none" stroke="#fbfbfe" stroke-width="2.500"><rect x="2" y="8" width="17" height="20" rx="3"/><path d="M7 2h12a5 5 0 0 1 5 5v16" stroke-width="3"/></svg></span>
    <span class="vr2"></span>
    <span class="slot w58"><svg width="24" height="32" viewBox="0 0 24 32"><path fill="#fbfbfe" d="M3 6h4a5 5 0 0 1 10 0h4a2 2 0 0 1 2 2v21a3 3 0 0 1-3 3H4a3 3 0 0 1-3-3V8a2 2 0 0 1 2-2z"/><path d="M6 11h12M6 16h12M6 21h8" stroke="#2b2a33" stroke-width="2.200"/></svg></span>
    <span class="slot"><svg width="32" height="30" viewBox="0 0 32 30" fill="none" stroke="#fbfbfe" stroke-width="2.700"><path d="M5 3h22a3 3 0 0 1 3 3v8a14 13 0 0 1-28 0V6a3 3 0 0 1 3-3z"/><path d="m9 11 7 7 7-7"/></svg></span>
    <span class="slot"><svg width="30" height="32" viewBox="0 0 30 32" fill="none" stroke="#fbfbfe" stroke-width="2.600"><path d="M15 1v20M7 13.500l8 8 8-8M2 22v4a4 4 0 0 0 4 4h18a4 4 0 0 0 4-4v-4"/></svg></span>
    <span class="slot"><svg width="30" height="30" viewBox="0 0 30 30" fill="none" stroke="#fbfbfe" stroke-width="2.500"><path d="M3 2v26M9.500 6v22M16 6v22M20 6l7 22"/></svg></span>
    <span class="slot"><svg width="34" height="28" viewBox="0 0 34 28" fill="none" stroke="#fbfbfe" stroke-width="2.500"><rect x="2" y="2" width="30" height="24" rx="4"/><path d="M15.500 2v24M6 8h6M6 13h6M6 18h6"/></svg></span>
    <span class="slot"><svg width="32" height="32" viewBox="0 0 32 32"><circle cx="16" cy="16" r="14" fill="none" stroke="#fbfbfe" stroke-width="2.500"/><circle cx="16" cy="12" r="5.500" fill="#fbfbfe"/><path d="M6.500 20h19a10.500 10.500 0 0 1-19 0z" fill="#fbfbfe"/></svg></span>
    <span class="slot"><svg width="34" height="32" viewBox="0 0 34 32"><path fill="#0e8a6d" d="M17 0a16 16 0 1 1 0 32H1V16A16 16 0 0 1 17 0z"/><path fill="none" stroke="#e6f5f1" stroke-width="1.300" d="M17 2a14 14 0 1 1 0 28H3V16A14 14 0 0 1 17 2z"/><path d="M24 11a8.800 8.800 0 1 0 1.500 6h-7" fill="none" stroke="#fff" stroke-width="3.200"/></svg></span>
    <span class="slot"><svg width="34" height="32" viewBox="0 0 34 32"><path fill="#a8875a" d="M17 1c9 0 13 6 13 14v12h-5V12H9v15H4V15C4 7 8 1 17 1z"/><path fill="#a8875a" d="M6 5h22v8H6z"/><path fill="#dd9b77" d="M7 14c6-1 11-3 14-5 2 2 4 4 6 5v8c0 5-5 8-10 8S7 27 7 22z"/><circle cx="10" cy="17" r="5" fill="#a6d3e0" stroke="#fff" stroke-width="1.800"/><circle cx="24" cy="17" r="5" fill="#a6d3e0" stroke="#fff" stroke-width="1.800"/><path d="M13 26h8" stroke="#b8404a" stroke-width="2"/></svg></span>
    <span class="slot"><svg width="32" height="32" viewBox="0 0 32 32"><rect x="2" y="1.500" width="28" height="29" rx="4" fill="#3a0000" stroke="#ff2c2c" stroke-width="2.500"/><text x="16" y="26.500" font-family="Roboto" font-weight="900" font-size="29" fill="#ff2c2c" text-anchor="middle">S</text></svg></span>
    <span class="slot"><svg width="32" height="32" viewBox="0 0 32 32"><path fill="#4c5b6b" d="M0 0h32v32H0z"/><text x="16" y="25" font-family="Roboto" font-size="26" fill="#fff" text-anchor="middle">S</text></svg></span>
    <span class="slot"><svg width="26" height="30" viewBox="0 0 26 30"><path fill="#f0f0f0" d="M1 1h24v20l-7 8H1z"/><path fill="#aaa" d="M18 29v-8h7z"/><text x="13" y="22" font-family="Liberation Serif" font-weight="700" font-size="26" fill="#4a4a4a" text-anchor="middle">T</text></svg></span>
    <span class="slot"><svg width="30" height="32" viewBox="0 0 30 32" fill="none" stroke="#fbfbfe" stroke-width="2.600"><path d="M4 30.500h19a4 4 0 0 0 4-4V13a3 3 0 0 0-3-3h-5V6a4 4 0 0 0-8 0v4H5a2 2 0 0 0-2 2v5h3a4 3.500 0 0 1 0 8H3v4a1.500 1.500 0 0 0 1 1.500z"/></svg></span>
    <span class="slot"><svg width="26" height="24" viewBox="0 0 26 24" stroke="#fbfbfe" stroke-width="2.500"><path d="M1 3h24M1 12h24M1 21h24"/></svg></span>
  </div>

  <div class="marks d-flex align-items-center flex-shrink-0">
    <span class="bm"><svg width="32" height="32" viewBox="0 0 32 32" fill="none" stroke="#fbfbfe" stroke-width="2.400"><circle cx="15" cy="16" r="13.500"/><ellipse cx="15" cy="16" rx="6.500" ry="13.500"/><path d="M2 16h26"/></svg><svg width="17" height="17" viewBox="0 0 17 17" fill="none" stroke="#fbfbfe" stroke-width="1.800"><rect x="1" y="1" width="15" height="15" rx="1"/><path d="m5 5 7 7M12 5l-7 7"/></svg><span>Wirify by Volkside</span></span>
    <span class="bm"><svg width="32" height="32"><use href="#folder"/></svg><span>Toolbar Design</span></span>
    <span class="bm"><svg width="32" height="32" viewBox="0 0 32 32"><rect width="32" height="32" rx="4" fill="#161616"/><path d="m6 9 5 8 5-8M11 17l-3 7" fill="none" stroke="#08bdba" stroke-width="3"/><path d="M18 8v14h8" fill="none" stroke="#33b1ff" stroke-width="3.500"/></svg><span>Your Learning</span></span>
    <span class="bm"><svg width="32" height="32" viewBox="0 0 32 32"><rect width="32" height="32" rx="3" fill="#4285f4"/><path d="M6 8h20M6 16h20M6 24h14" stroke="#fff" stroke-width="3.600"/></svg><span>Portfolio Website N...</span></span>
    <span class="bm"><svg width="32" height="32"><use href="#amark"/></svg><span>Alex Levy's Portfolio</span></span>
    <span class="bm"><svg width="31" height="32" viewBox="0 0 29 32"><path fill="#f76900" d="M6 0h16l4 4v9h-8V8h-7v4l15 7v9l-4 4H6l-4-4v-9h8v5h8v-4L2 13V4z"/></svg><span>Student Health Insu...</span></span>
    <span class="bm"><svg width="32" height="32"><use href="#folder"/></svg><span>Optimal Assessmen...</span></span>
    <span class="bm"><svg width="32" height="32"><use href="#folder"/></svg><span>Job/internship portals</span></span>
    <span class="bm"><svg width="34" height="32" viewBox="0 0 34 32" fill="none" stroke-width="4"><circle cx="17" cy="16" r="14" stroke="#f5b400" stroke-dasharray="4 25.300" /><circle cx="17" cy="16" r="14" stroke="#f26b3a" stroke-dasharray="4 25.300" stroke-dashoffset="-7.300"/><circle cx="17" cy="16" r="14" stroke="#7b2d8e" stroke-dasharray="4 25.300" stroke-dashoffset="-14.600"/><circle cx="17" cy="16" r="14" stroke="#ffc233" stroke-dasharray="4 25.300" stroke-dashoffset="-22"/></svg><span>Playbook for univer...</span></span>
    <span class="bm"><svg width="32" height="32"><use href="#folder"/></svg><span>Mapping</span></span>
    <span class="bm"><svg width="26" height="26" viewBox="0 0 26 26" fill="none" stroke="#fbfbfe" stroke-width="2.500"><path d="m2 2 9 11-9 11M14 2l9 11-9 11"/></svg></span>
    <span class="bm"><svg width="32" height="32"><use href="#folder"/></svg><span>Other Bookmarks</span></span>
  </div>

  <section class="notice d-flex align-items-start flex-shrink-0">
    <svg width="46" height="40" viewBox="0 0 46 40" fill="none" stroke="#a85c00" stroke-width="4" style="margin-top:15px"><path d="M23 5 4.500 36h37z"/><path d="M23 15v10M23 28v4"/></svg>
    <div class="msg">If you haven't completed migration, finish setting up your Google Analytics 4 property before your connected Universal Analytics property is permanently deleted<br><span>on Jul 1, 2024. To maintain access to data from this property, you should download your data now.</span></div>
    <span class="act" style="margin-left:40px;width:166px">Dismiss</span>
    <span class="act">Learn more</span>
    <button class="btn go ms-auto" type="button">Go to Setup Assistant</button>
  </section>

  <section class="gahead d-flex align-items-center flex-shrink-0">
    <svg width="50" height="58"><use href="#ga"/></svg>
    <span class="prod">Analytics</span>
    <span class="vr2" style="height:64px;background:#dadce0"></span>
    <div style="margin-left:34px;margin-top:-6px">
      <div class="crumb rb d-flex align-items-center">All accounts<svg width="12" height="20" viewBox="0 0 12 20" fill="none" stroke="#5f6368" stroke-width="2.600"><path d="m2 2 8 8-8 8"/></svg>The NewsHouse</div>
      <div class="acct d-flex align-items-center"><span>http://www.thenewshouse.c...</span></div>
    </div>
    <svg width="20" height="10" style="margin-top:30px"><use href="#dn"/></svg>
    <div class="find d-flex align-items-center" style="margin-left:47px"><svg width="46" height="46" viewBox="0 0 24 24" fill="#5f6368"><path d="M15.500 14h-.79l-.28-.27C15.410 12.590 16 11.110 16 9.500 16 5.910 13.090 3 9.500 3S3 5.910 3 9.500 5.910 16 9.500 16c1.610 0 3.090-.59 4.230-1.570l.27.28v.79l5 4.990L20.490 19l-4.990-5zm-6 0C7.010 14 5 11.990 5 9.500S7.010 5 9.500 5 14 7.010 14 9.500 11.990 14 9.500 14z"/></svg><span>Try searching "Web overview"</span></div>
    <svg class="ms-auto" width="38" height="38" viewBox="0 0 38 38" fill="#444746"><path d="M0 0h15v15H0zM22 0h15v15H22zM0 22h15v15H0zM22 22h15v15H22z"/></svg>
    <svg width="48" height="48" viewBox="0 0 24 24" fill="#5f6368" style="margin:0 40px 0 53px"><path d="M12 2C6.480 2 2 6.480 2 12s4.480 10 10 10 10-4.480 10-10S17.520 2 12 2zm1 17h-2v-2h2v2zm2.070-7.750l-.9.92C13.450 12.900 13 13.500 13 15h-2v-.5c0-1.100.45-2.100 1.170-2.830l1.240-1.260c.37-.36.59-.86.59-1.410 0-1.100-.9-2-2-2s-2 .9-2 2H8c0-2.210 1.790-4 4-4s4 1.790 4 4c0 .88-.36 1.680-.93 2.250z"/></svg>
    <span class="avatar me" style="margin-right:48px">A</span>
  </section>

  <div class="d-flex flex-grow-1">
    <aside class="rail d-flex flex-column">
      <span class="ri"><svg width="38" height="40" viewBox="0 0 38 40" fill="currentColor"><path d="M3 14 19 1l16 13v23H24V23H14v14H3z"/></svg></span>
      <span class="ri sel"><svg width="38" height="38" viewBox="0 0 38 38"><rect x="1" y="1" width="36" height="36" rx="4" fill="#fff"/><path d="M11 15v13M19 9v19M27 21v7" stroke="#1a73e8" stroke-width="4"/></svg></span>
      <span class="ri"><svg width="42" height="42" viewBox="0 0 42 42"><path d="M21 2.500A18.500 18.500 0 1 0 21 39.500h18.500V21A18.500 18.500 0 0 0 21 2.500z" fill="none" stroke="#5f6368" stroke-width="4"/><path d="M33 40V34l7-3v9z" fill="#5f6368"/><path d="m5 27 8-7 7 6 11-10" fill="none" stroke="#5f6368" stroke-width="4"/><path d="M24 13h10v10z" fill="#5f6368"/></svg></span>
      <span class="ri"><svg width="44" height="44" viewBox="0 0 44 44" fill="none" stroke="#5f6368" stroke-width="4"><path d="M19 40A18.500 18.500 0 1 1 39.500 21"/><path d="M17 31.500a11 11 0 1 1 14-11"/><path d="m20 20 22 8-8 4 8 8-4 4-8-8-4 8z" fill="#5f6368" stroke="none"/></svg></span>
      <span class="ri cog"><svg width="48" height="48" viewBox="0 0 24 24" fill="currentColor"><path d="M19.140 12.940c.04-.3.06-.61.06-.94 0-.32-.02-.64-.07-.94l2.030-1.580c.18-.14.23-.41.12-.61l-1.920-3.320c-.12-.22-.37-.29-.59-.22l-2.390.96c-.5-.38-1.030-.7-1.620-.94l-.36-2.540c-.04-.24-.24-.41-.48-.41h-3.840c-.24 0-.43.17-.47.41l-.36 2.540c-.59.24-1.130.57-1.620.94l-2.390-.96c-.22-.08-.47 0-.59.22L2.740 8.870c-.12.21-.08.47.12.61l2.030 1.580c-.05.3-.09.63-.09.94s.02.64.07.94l-2.030 1.580c-.18.14-.23.41-.12.61l1.920 3.320c.12.22.37.29.59.22l2.390-.96c.5.38 1.030.7 1.620.94l.36 2.540c.05.24.24.41.48.41h3.840c.24 0 .44-.17.47-.41l.36-2.540c.59-.24 1.130-.56 1.620-.94l2.390.96c.22.08.47 0 .59-.22l1.920-3.320c.12-.22.07-.47-.12-.61l-2.010-1.580zM12 15.600c-1.980 0-3.600-1.620-3.600-3.600s1.620-3.600 3.600-3.600 3.600 1.620 3.600 3.600-1.620 3.600-3.600 3.600z"/></svg></span>
    </aside>

    <nav class="rnav">
      <div class="nl top1">Realtime</div>
      <div class="ndiv"></div>
      <div class="nl sec">Life cycle<svg width="22" height="14"><use href="#up"/></svg></div>
      <div class="nl"><svg class="tw" height="16"><use href="#right"/></svg>Acquisition</div>
      <div class="nl"><svg class="tw" height="16"><use href="#right"/></svg>Engagement</div>
      <div class="nl"><svg class="tw" height="16"><use href="#right"/></svg>Monetization</div>
      <div class="nl">Retention</div>
      <div class="ndiv"></div>
      <div class="nl sec">Search Console<svg width="22" height="14"><use href="#up"/></svg></div>
      <div class="nl" style="letter-spacing:-.35px"><svg class="tw" height="16"><use href="#down"/></svg>Search Console</div>
      <div class="nl sub">Queries</div>
      <div class="nl sub">Google organic search traf...</div>
      <div class="ndiv"></div>
      <div class="nl sec hov1">User<svg width="22" height="14"><use href="#up"/></svg></div>
      <div class="nl" style="letter-spacing:.1px"><svg class="tw" height="16"><use href="#right"/></svg>User attributes</div>
      <div class="nl hov2"><svg class="tw" height="16"><use href="#down"/></svg>Tech</div>
      <div class="nl sub cur">Overview</div>
      <div class="nl sub" style="letter-spacing:-.25px">Tech details</div>
      <div class="ndiv" style="width:460px;margin:25px 0 39px 26px"></div>
      <svg width="18" height="28" viewBox="0 0 18 28" fill="none" stroke="#000" stroke-width="3.500" style="margin-left:430px"><path d="M15 3 4 14l11 11"/></svg>
    </nav>

    <section class="flex-grow-1">
      <div class="rhead d-flex align-items-center">
        <span class="avatar" style="width:56px;height:56px;background:#1a73e8;font-size:28px;font-weight:500;margin-top:6px">A</span>
        <span class="addc slot" style="margin-left:16px;margin-top:6px"><svg width="24" height="24" viewBox="0 0 24 24" stroke="#5f6368" stroke-width="2.500"><path d="M12 0v24M0 12h24"/></svg></span>
        <span class="vr2" style="margin-left:48px;height:48px;background:#dadce0;margin-top:-2px"></span>
        <span class="rt" style="margin-top:7px">Tech overview</span>
        <span class="last rb slot ms-auto" style="margin-top:3px">Last 12 months</span>
        <span class="dates" style="margin-top:5px">Jun 27, 2023 - Jun 27, 2024</span>
        <svg width="18" height="9" style="margin-top:3px"><use href="#dn"/></svg>
        <span class="vr2" style="margin-left:27px;height:48px;background:#dadce0;margin-top:-2px"></span>
        <svg width="42" height="40" viewBox="0 0 42 40" style="margin-left:25px;margin-top:-1px"><rect y="4" width="15" height="32" rx="3" fill="#5f6368"/><path d="M20.500 0v40" stroke="#5f6368" stroke-width="3.500"/><rect x="28" y="6" width="11" height="28" rx="1" fill="none" stroke="#5f6368" stroke-width="4"/></svg>
        <svg width="38" height="42" viewBox="0 0 38 42" fill="none" stroke="#5f6368" stroke-width="3.500" style="margin-left:32px;margin-top:-1px"><path d="M30 7 7 21l23 14"/><g fill="#f8f9fb"><circle cx="30" cy="7" r="4.500"/><circle cx="7" cy="21" r="4.500"/><circle cx="30" cy="35" r="4.500"/></g></svg>
        <svg width="44" height="38" viewBox="0 0 44 38" fill="#5f6368" style="margin-left:31px;margin-right:116px;margin-top:-1px"><path d="m4 33 12-16 10 11 14-15" fill="none" stroke="#5f6368" stroke-width="4.500"/><circle cx="4.500" cy="33" r="4.500"/><circle cx="16" cy="18" r="4"/><circle cx="26" cy="28" r="4"/><circle cx="39.500" cy="14" r="4.500"/><path d="m28 1 2 5 5 2-5 2-2 5-2-5-5-2 5-2zM6 7l1.500 3.500L11 12l-3.500 1.500L6 17l-1.500-3.500L1 12l3.500-1.500z"/></svg>
      </div>

      <div class="cards">
        <div class="crow r1 d-flex">
          <article class="gc wide">
            <div class="d-flex justify-content-between"><div class="ct"><span class="dl">Users</span> by <span class="dl l3">Platform</span></div><span class="chk d"><svg width="36" height="36"><use href="#ok"/></svg><svg width="18" height="9"><use href="#dn"/></svg></span></div>
            <div class="d-flex" style="margin-top:45px">
              <svg width="500" height="500" viewBox="0 0 500 500" style="margin:17px 0 0 27px"><circle cx="250" cy="250" r="247" fill="#d2e0fc" stroke="#4285f4" stroke-width="2"/><text x="249" y="259" font-family="Roboto" font-weight="500" font-size="26" letter-spacing=".5" fill="#202124" text-anchor="middle">Web</text></svg>
              <div class="rb" style="margin-left:142px"><div style="font-size:23px;line-height:30px;color:#5f6368;letter-spacing:.6px">WEB</div><div style="font-size:44px;line-height:60px;color:#202124;letter-spacing:1.1px">100.0%</div></div>
            </div>
            <div class="more">View platforms<svg width="26" height="26"><use href="#arrow"/></svg></div>
          </article>

          <article class="gc">
            <div class="d-flex justify-content-between"><div><div class="cap rb" style="margin-top:7px"><span class="ul">USERS IN LAST 30 MINUTES</span></div><div style="font-size:70px;line-height:72px;margin-top:11px;font-weight:400">6</div></div><span class="chk d"><svg width="36" height="36"><use href="#ok"/></svg><svg width="18" height="9"><use href="#dn"/></svg></span></div>
            <div class="cap rb" style="margin-top:45px">USERS PER MINUTE</div>
            <svg width="480" height="86" viewBox="0 0 480 86" style="margin:17px 0 0 16px"><path d="M0 85h480" stroke="#bdc1c6" stroke-width="3" stroke-dasharray="14 2"/><path fill="#1a73e8" d="M48 0h14v86H48zM144 44h14v42h-14zM224 44h14v42h-14zM240 44h14v42h-14zM432 0h14v86h-14z"/></svg>
            <div class="thead2 cap wd rb" style="margin-top:24px"><span class="ul align-self-start">TOP PLATFORMS</span><span class="ul align-self-start">USERS</span></div>
            <div class="tr2 rb border-0" style="height:59px"><span>web</span><span>6</span><i style="width:100%;bottom:-1px"></i></div>
            <div class="more">View realtime<svg width="26" height="26"><use href="#arrow"/></svg></div>
          </article>

          <article class="gc">
            <div class="d-flex justify-content-between"><div class="ct"><b>Users</b><svg class="tv"><use href="#tri"/></svg> by<br><span class="dl l3">Operating system</span></div><span class="chk d"><svg width="36" height="36"><use href="#ok"/></svg><svg width="18" height="9"><use href="#dn"/></svg></span></div>
            <div class="thead2 cap wd rb" style="margin-top:14px"><span class="ul align-self-start">OPERATING SYSTEM</span><span class="ul align-self-start">USERS</span></div>
            <div class="tr2 rb"><span>iOS</span><span>54K</span><i style="width:217px"></i></div>
            <div class="tr2 rb"><span>Android</span><span>32K</span><i style="width:129px"></i></div>
            <div class="tr2 rb"><span>Windows</span><span>20K</span><i style="width:78px"></i></div>
            <div class="tr2 rb"><span>Macintosh</span><span>19K</span><i style="width:75px"></i></div>
            <div class="tr2 rb"><span>Chrome OS</span><span>2.6K</span><i style="width:10px"></i></div>
            <div class="tr2 rb"><span>Linux</span><span>2.4K</span><i style="width:10px"></i></div>
            <div class="tr2 rb border-0"><span>Playstation 4</span><span>21</span></div>
            <div class="more">View operating systems<svg width="26" height="26"><use href="#arrow"/></svg></div>
          </article>
        </div>

        <div class="crow r2 d-flex">
          <article class="gc">
            <div class="d-flex justify-content-between"><div class="ct"><b>Users</b><svg class="tv"><use href="#tri"/></svg> by<br><span class="dl l1">Platform / device ca</span>...</div><span class="chk d"><svg width="36" height="36"><use href="#ok"/></svg><svg width="18" height="9"><use href="#dn"/></svg></span></div>
            <div class="thead2 cap wd rb" style="margin-top:15px"><span><span class="ul">PLATFORM / DEVIC</span><span style="letter-spacing:0">...</span></span><span class="ul align-self-start">USERS</span></div>
            <div class="tr2 rb"><span>web / mobile</span><span>85K</span><i style="width:338px"></i></div>
          </article>

          <article class="gc wide">
            <div class="d-flex"><div class="ct"><b>Users</b><svg class="tv"><use href="#tri"/></svg> by <span class="dl l1">Browser</span></div>
              <span class="chk ms-auto" style="width:56px"><svg width="36" height="36"><use href="#ok"/></svg></span>
              <span class="chk rb" style="width:426px;margin-left:9px;font-size:25px;gap:13px;letter-spacing:-.04px;padding-left:3px"><svg width="20" height="22" viewBox="0 0 20 22" fill="none" stroke="#202124" stroke-width="2.600"><path d="M2 2h16l-6 8.500V20H8v-9.500z"/></svg>Platform exactly matches 'web'</span></div>
            <svg width="832" height="150" viewBox="0 0 832 150" style="margin-top:35px"><path d="M201 0v150M373 0v150M545 0v150M718 0v150M188 59h12M188 115h12" stroke="#dadce0" stroke-width="2"/><path fill="#1a73e8" d="M200 34h528v50H200zM200 90h436v50H200z"/><g font-family="Roboto" font-size="26" fill="#3c4043"><text x="0" y="67">Chrome</text><text x="0" y="123">Safari</text></g></svg>
          </article>

          <article class="gc">
            <div class="d-flex justify-content-between"><div class="ct"><b>Users</b><svg class="tv"><use href="#tri"/></svg> by <span class="dl l2">Device category</span></div><span class="chk d"><svg width="36" height="36"><use href="#ok"/></svg><svg width="18" height="9"><use href="#dn"/></svg></span></div>
            <svg width="512" height="200" viewBox="0 0 512 200" style="margin-top:67px" fill="none" stroke-width="54"><path stroke="#4285f4" d="M99.500 183.500A156.500 156.500 0 0 1 256 27"/><path stroke="#1967d2" d="M256 27A156.500 156.500 0 0 1 412.500 183.500"/><path stroke="#8ab4f8" d="M243.500 27.500A156.500 156.500 0 0 1 256 27"/></svg>
          </article>
        </div>
      </div>
    </section>
  </div>
  <div class="fade-b"></div>
  <svg class="ptr" width="22" height="36" viewBox="0 0 22 36"><path d="M2 2v26l6-5.500 4.500 10.500 4.500-2-4.500-10H21z" fill="#000" stroke="#fff" stroke-width="2"/></svg>
  <div class="ff-edge"></div>
</main>

<footer class="under">
  <div class="dock d-flex align-items-center">
    <div class="app on"><svg width="50" height="50" viewBox="0 0 50 50"><rect width="50" height="50" rx="11" fill="#eef1f5"/><path fill="url(#gBlue)" d="M11 0h19c-5 9-8 18-8 28h7c0 8 0 15 2 22H11A11 11 0 0 1 0 39V11A11 11 0 0 1 11 0z"/><path d="M13 14v5M37 14v5M9 33c8 9 23 9 32 0" fill="none" stroke="#1b2a44" stroke-width="2.500" stroke-linecap="round"/></svg></div>
    <div class="app"><svg width="50" height="50" viewBox="0 0 50 50"><rect width="50" height="50" rx="11" fill="#b5b5b8"/><g><rect x="8" y="8" width="9" height="9" rx="2.500" fill="#3ddc54"/><rect x="20.500" y="8" width="9" height="9" rx="2.500" fill="#fbb900"/><rect x="33" y="8" width="9" height="9" rx="2.500" fill="#ff8c0a"/><rect x="8" y="20.500" width="9" height="9" rx="2.500" fill="#e2272b"/><rect x="20.500" y="20.500" width="9" height="9" rx="2.500" fill="#84868b"/><rect x="33" y="20.500" width="9" height="9" rx="2.500" fill="#fa3d5a"/><rect x="8" y="33" width="9" height="9" rx="2.500" fill="#9a3fd0"/><rect x="20.500" y="33" width="9" height="9" rx="2.500" fill="#1a8ff5"/><rect x="33" y="33" width="9" height="9" rx="2.500" fill="#19cf95"/></g></svg></div>
    <div class="app on"><svg width="50" height="50" viewBox="0 0 50 50"><rect width="50" height="50" rx="11" fill="url(#gMail)"/><rect x="7" y="13" width="36" height="24" rx="3" fill="#f4f4f4"/><path d="m8 15 17 13 17-13M8 36l12-12M42 36 30 24" fill="none" stroke="#9a9a9a" stroke-width="1.500"/></svg><span class="cnt big">31,434</span></div>
    <div class="app on"><svg width="50" height="50" viewBox="0 0 50 50"><rect width="50" height="50" rx="11" fill="#f3f3f5"/><circle cx="25" cy="25" r="21.500" fill="#1d8df2"/><circle cx="25" cy="25" r="18.500" fill="none" stroke="#9fd4ff" stroke-width="2.500" stroke-dasharray="1 2"/><path d="M39 11 22 21l6 7z" fill="#f0443a"/><path d="M11 39 22 21l6 7z" fill="#f4f4f4"/></svg></div>
    <div class="app"><svg width="50" height="50" viewBox="0 0 50 50"><rect width="50" height="50" rx="11" fill="#f8f8f6"/><path d="M0 16v-5A11 11 0 0 1 11 0h28a11 11 0 0 1 11 11v5z" fill="#f2453d"/><text x="25" y="13" font-family="Inter" font-size="11" font-weight="500" fill="#fff" text-anchor="middle">JUN</text><text x="25" y="41" font-family="Inter" font-size="29" fill="#2a2a2a" text-anchor="middle" letter-spacing="-1">28</text></svg></div>
    <div class="app on"><svg width="50" height="50" viewBox="0 0 50 50"><rect width="50" height="50" rx="11" fill="#f5f5f0"/><path d="M0 12v-1A11 11 0 0 1 11 0h28a11 11 0 0 1 11 11v1z" fill="#fdcf0a"/><path d="M0 13h50" stroke="#b9b39a" stroke-width="1.500" stroke-dasharray="1 1.500"/><path d="M2 25h46M2 37h46" stroke="#d3d3cc" stroke-width="1.500"/></svg></div>
    <div class="app"><svg width="50" height="50" viewBox="0 0 50 50"><rect width="50" height="50" rx="11" fill="#fbfbfb"/><g opacity=".85"><ellipse cx="25" cy="14" rx="6.500" ry="10.500" fill="#fb9a1c"/><ellipse cx="25" cy="14" rx="6.500" ry="10.500" fill="#f2d01c" transform="rotate(45 25 25)"/><ellipse cx="25" cy="14" rx="6.500" ry="10.500" fill="#8fc73a" transform="rotate(90 25 25)"/><ellipse cx="25" cy="14" rx="6.500" ry="10.500" fill="#53b79c" transform="rotate(135 25 25)"/><ellipse cx="25" cy="14" rx="6.500" ry="10.500" fill="#58a6e0" transform="rotate(180 25 25)"/><ellipse cx="25" cy="14" rx="6.500" ry="10.500" fill="#8080d0" transform="rotate(225 25 25)"/><ellipse cx="25" cy="14" rx="6.500" ry="10.500" fill="#c678b8" transform="rotate(270 25 25)"/><ellipse cx="25" cy="14" rx="6.500" ry="10.500" fill="#f0503c" transform="rotate(315 25 25)"/></g></svg></div>
    <div class="app on"><svg width="50" height="50" viewBox="0 0 50 50"><rect width="50" height="50" rx="11" fill="url(#gGreen)"/><path d="M25 9c10 0 18 6.500 18 15s-8 15-18 15c-2 0-3.500-.2-5-.6-2 1.600-4 2.500-7 2.600 1.500-1.500 2-3 2-4.800C10 33.500 7 29 7 24 7 15.500 15 9 25 9z" fill="#f2f4f2"/></svg><span class="cnt">3</span></div>
    <div class="app"><svg width="50" height="50" viewBox="0 0 50 50"><path d="M46 8h4v10h-4z" fill="#999"/><path d="M46 18h4v10h-4z" fill="#2a8df0"/><path d="M46 28h4v8h-4z" fill="#ff9500"/><path d="M46 36h4v8h-4z" fill="#34c759"/><rect width="48" height="50" rx="10" fill="#ab8149"/><circle cx="25" cy="26" r="14.500" fill="none" stroke="#86622f" stroke-width="1.800"/><circle cx="25" cy="22" r="5.500" fill="#86622f"/><path d="M14 35c3-7 19-7 22 0-6 6-16 6-22 0z" fill="#86622f"/></svg></div>
    <div class="app"><svg width="50" height="50" viewBox="0 0 50 50"><rect width="50" height="50" rx="11" fill="url(#gGreen)"/><rect x="8" y="14" width="23" height="22" rx="5" fill="#f2f4f2"/><path d="m33 22 9-7v20l-9-7z" fill="#f2f4f2"/></svg></div>
    <div class="app"><svg width="50" height="50" viewBox="0 0 50 50"><rect width="50" height="50" rx="11" fill="url(#gRed)"/><path d="M18 13 38 8v25" fill="none" stroke="#fff" stroke-width="3"/><path d="M18 12v24M18 17l20-5" stroke="#fff" stroke-width="3.500"/><ellipse cx="14.500" cy="37" rx="5" ry="4" fill="#fff"/><ellipse cx="34.500" cy="33" rx="5" ry="4" fill="#fff"/></svg></div>
    <div class="app on"><svg width="50" height="50" viewBox="0 0 50 50"><rect width="50" height="50" rx="11" fill="url(#gGray)"/><circle cx="25" cy="25" r="20" fill="#3a3b3e"/><circle cx="25" cy="25" r="17" fill="none" stroke="#b8babd" stroke-width="4"/><circle cx="25" cy="25" r="20" fill="none" stroke="#4a4b4e" stroke-width="2.500" stroke-dasharray="2 1.500"/><circle cx="25" cy="25" r="5" fill="none" stroke="#c2c4c7" stroke-width="3"/><path d="M30 25h13M22.500 20.500 16 9.500M22.500 29.500 16 40.500" stroke="#c2c4c7" stroke-width="3.500"/></svg><span class="cnt">2</span></div>
    <div class="app"><svg width="50" height="50" viewBox="0 0 50 50"><rect width="50" height="50" rx="11" fill="url(#gStore)"/><path d="m28 10-14 25M23 10l16 28M8 30h22M36 30h6M13 36l-2 4" stroke="#fff" stroke-width="4" stroke-linecap="round"/></svg></div>
    <div class="app on"><svg width="50" height="50" viewBox="0 0 50 50"><rect width="50" height="50" rx="11" fill="#f6f6f6"/><circle cx="25" cy="25" r="21" fill="#fbc116"/><path d="M25 4a21 21 0 0 1 18.200 10.500H25L16 30 6.800 14.500A21 21 0 0 1 25 4z" fill="#e33b2e"/><path d="M6.800 14.500 16 30.300 25 35.500h9L25 46A21 21 0 0 1 6.800 14.500z" fill="#2a9d48"/><circle cx="25" cy="25" r="10.500" fill="#fff"/><circle cx="25" cy="25" r="8.300" fill="#3f7fee"/></svg></div>
    <div class="app on"><svg width="50" height="50"><use href="#fox"/></svg></div>
    <div class="app on"><svg width="50" height="50" viewBox="0 0 50 50"><rect width="50" height="50" rx="11" fill="#fff"/><path d="M33 8v34L8 20.500l3.500-3L33 33z" fill="#0a6fc2"/><path d="M33 8 8 29.500l3.500 3L33 17z" fill="#0f83d6"/><path d="m33 7 9 4v28l-9 4z" fill="#2ba3f0"/></svg></div>
    <div class="app on"><svg width="50" height="50" viewBox="0 0 50 50"><rect width="50" height="50" rx="11" fill="url(#gGit)"/><svg x="4.500" y="5" width="41" height="41" fill="#f3f1f6"><use href="#github"/></svg></svg></div>
    <div class="app on"><svg width="58" height="58" viewBox="0 0 58 58" style="margin-top:-4px"><circle cx="29" cy="28" r="22.500" fill="none" stroke="#7eb02b" stroke-width="11"/><path d="m33 33 8-2 16 18v9H46z" fill="#4f9a34"/><path d="m33 33 8-2 8 9-9 9z" fill="#eedc3a"/><path d="M24 25h8l5 7-4 9-9-10z" fill="#f0882c"/></svg></div>
    <div class="app on"><svg width="50" height="50" viewBox="0 0 50 50"><rect width="50" height="50" rx="11" fill="#1b1b1c"/><svg x="13" y="7" width="24" height="36"><use href="#figma"/></svg></svg></div>
    <div class="app on"><svg width="50" height="50" viewBox="0 0 50 50"><rect width="50" height="50" rx="11" fill="url(#gCC)"/><rect width="50" height="50" rx="11" fill="url(#gCC2)"/><g fill="none" stroke="#fff" stroke-width="3.500"><path d="M30 38H17a9.500 9.500 0 1 1 4-18 11.500 11.500 0 1 1 9 18c-3 0-5-1-7-3l-5-5"/><path d="M22 31c-3-4-3-9 2-12 5-2 9 0 12 4"/></g></svg></div>
    <div class="app"><span class="tile t-ar">Ar</span></div>
    <div class="app"><span class="tile t-sg">Sg</span></div>
    <div class="app"><span class="tile t-xd">Xd</span></div>
    <div class="app on"><span class="tile t-id">Id</span></div>
    <div class="app on"><span class="tile t-ai">Ai</span></div>
    <div class="app on"><span class="tile t-ps">Ps</span></div>
    <div class="app on"><span class="tile t-ae">Ae</span></div>
    <div class="app"><span class="tile t-pr">Pr</span></div>
    <div class="app"><svg width="58" height="50" viewBox="0 0 58 50"><path d="M3 36 32 13M12 15h25M29 4l18 14" stroke="#ea7600" stroke-width="6" stroke-linecap="round"/><circle cx="38" cy="29" r="18.500" fill="#ea7600"/><circle cx="38" cy="28" r="12" fill="#fff"/><circle cx="38" cy="28" r="7.500" fill="#265787"/></svg></div>
    <div class="app"><svg width="50" height="50" viewBox="0 0 50 50"><rect width="50" height="50" rx="11" fill="#b30b00"/><path d="M11 40c-3-4 12-10 25-10 8 0 7 5 2 4-8-2-17-13-16-21 1-5 5-3 4 3-1 9-11 27-15 24z" fill="none" stroke="#fff" stroke-width="2.500"/></svg></div>
    <div class="app on"><svg width="50" height="50" viewBox="0 0 50 50"><rect width="50" height="50" rx="11" fill="#fff"/><path d="M14 8h28v9H14z" fill="#41a5ee"/><path d="M14 17h28v8H14z" fill="#2b7cd3"/><path d="M14 25h28v8H14z" fill="#185abd"/><path d="M14 33h28v9H14z" fill="#103f91"/><rect x="4" y="15" width="20" height="20" rx="2" fill="#185abd"/><text x="14" y="30" font-family="Open Sans" font-weight="700" font-size="14" fill="#fff" text-anchor="middle">W</text></svg></div>
    <div class="app on"><svg width="50" height="50" viewBox="0 0 50 50"><rect width="50" height="50" rx="11" fill="#fff"/><path d="M14 8h14v17H14z" fill="#21a366"/><path d="M28 8h14v9H28z" fill="#33c481"/><path d="M28 17h14v8H28z" fill="#21a366"/><path d="M14 25h28v17H14z" fill="#185c37"/><path d="M28 25h14v8H28z" fill="#107c41"/><rect x="4" y="15" width="20" height="20" rx="2" fill="#107c41"/><text x="14" y="30" font-family="Open Sans" font-weight="700" font-size="15" fill="#fff" text-anchor="middle">X</text></svg></div>
    <div class="app"><svg width="50" height="50" viewBox="0 0 50 50"><rect width="50" height="50" rx="11" fill="#fff"/><circle cx="26" cy="25" r="17" fill="#ed6c47"/><path d="M26 8a17 17 0 0 1 17 17H26z" fill="#ff8f6b"/><path d="M43 25a17 17 0 0 1-32 8l15-8z" fill="#d35230"/><rect x="5" y="15" width="20" height="20" rx="2" fill="#c43e1c"/><text x="15" y="30" font-family="Open Sans" font-weight="700" font-size="15" fill="#fff" text-anchor="middle">P</text></svg></div>
    <div class="app"><svg width="50" height="58" viewBox="0 0 50 58" style="margin-top:-6px"><rect y="6" width="50" height="50" rx="11" fill="#fafafa"/><path d="M2 17h46M2 23h46M2 29h46M2 35h46M2 41h46M2 47h46" stroke="#b9b9b9"/><path d="M8 6v50" stroke="#f3b0a8"/><path d="M46 2 28 38l-8 19" stroke="#5b7f96" stroke-width="4" fill="none"/><path d="M45 3 28 38" stroke="#b7d3e4" stroke-width="1.500"/></svg></div>
    <div class="app on"><svg width="50" height="52" viewBox="0 0 50 52"><rect width="50" height="50" rx="11" fill="#f3f3f3"/><path d="M4 12q0-8 8-8h26q8 0 8 8v15H4z" fill="#86b6ec"/><path d="M4 26h42v8H4z" fill="#2c568c"/><path d="M4 34l10 1 8-3 24 8v1q0 5-8 5H12q-8 0-8-8z" fill="#c5d6e2"/><path d="M25 30q0-6 11-6t11 6v5H25z" fill="#111"/><path d="M26 35h20l3 16H23z" fill="#bfc5ca" opacity=".9"/></svg></div>
    <div class="app"><svg width="50" height="50" viewBox="0 0 50 50"><rect width="50" height="50" rx="11" fill="url(#gQt)"/><circle cx="24" cy="24" r="16" fill="#0b9ff5" stroke="#d5dce2" stroke-width="6.500"/><path d="m28 28 8-3 8 20h-9z" fill="#b9c3cc"/></svg></div>
    <div class="app"><span class="tile t-zoom">zoom</span></div>
    <div class="app on"><svg width="50" height="50" viewBox="0 0 50 50"><rect width="50" height="50" rx="11" fill="#5865f2"/><svg x="8" y="8" width="34" height="34" viewBox="0 0 16 16" fill="#fff"><path d="M13.545 2.907a13.200 13.200 0 0 0-3.257-1.011.05.05 0 0 0-.052.025c-.141.25-.297.577-.406.833a12.200 12.200 0 0 0-3.658 0 8 8 0 0 0-.412-.833.05.05 0 0 0-.052-.025c-1.125.194-2.220.534-3.257 1.011a.04.04 0 0 0-.021.018C.356 6.024-.213 9.047.066 12.032q.003.022.021.037a13.300 13.300 0 0 0 3.995 2.020.05.05 0 0 0 .056-.019q.463-.63.818-1.329a.05.05 0 0 0-.01-.059l-.018-.011a9 9 0 0 1-1.248-.595.05.05 0 0 1-.02-.066l.015-.019q.127-.095.248-.195a.05.05 0 0 1 .051-.007c2.619 1.196 5.454 1.196 8.041 0a.05.05 0 0 1 .053.007q.121.1.248.195a.05.05 0 0 1-.004.085 8 8 0 0 1-1.249.594.05.05 0 0 0-.03.03.05.05 0 0 0 .003.041c.24.465.515.909.817 1.329a.05.05 0 0 0 .056.019 13.200 13.200 0 0 0 4.001-2.020.05.05 0 0 0 .021-.037c.334-3.451-.559-6.449-2.366-9.106a.03.03 0 0 0-.02-.019m-8.198 7.307c-.789 0-1.438-.724-1.438-1.612s.637-1.613 1.438-1.613c.807 0 1.450.73 1.438 1.613 0 .888-.637 1.612-1.438 1.612m5.316 0c-.788 0-1.438-.724-1.438-1.612s.637-1.613 1.438-1.613c.807 0 1.451.73 1.438 1.613 0 .888-.631 1.612-1.438 1.612"/></svg></svg></div>
    <span class="dsep"></span>
    <div class="app"><svg width="50" height="50" viewBox="0 0 50 50"><rect width="50" height="50" rx="11" fill="#b3b3b6"/><g fill="none" stroke-linecap="round"><path d="M13 36 25 13l12 23M10 25c4 8 24 8 31-4" stroke="#fff" stroke-width="12"/><path d="M10 25c4 8 24 8 31-4" stroke="#ff9b93" stroke-width="7"/><path d="m25 14 12 22" stroke="#f8455f" stroke-width="8"/><path d="M25 14 14 35" stroke="#ff536a" stroke-width="8"/><path d="M18 26l-4 9M10 22c2 6 6 8 12 9" stroke="#1a18c4" stroke-width="7"/></g></svg></div>
    <div class="app"><svg width="50" height="50" viewBox="0 0 50 50"><rect width="50" height="50" rx="11" fill="#fff"/><text x="24" y="36" font-family="Liberation Serif" font-style="italic" font-size="42" fill="#1c2b38" text-anchor="middle" letter-spacing="-2">ff</text><path d="m20 46 13-14" stroke="#e5532d" stroke-width="2.500"/></svg></div>
    <div class="app"><svg width="50" height="50"><use href="#fox"/></svg></div>
    <span class="dsep"></span>
    <div class="app"><svg width="52" height="54" viewBox="0 0 52 54" style="margin-top:-2px;margin-right:3px"><path d="M1 2h37v7l13 12v31H1z" fill="#f4f4f4"/><path d="M38 2v14l13 6z" fill="#d5d8dc"/><path d="M5 8h20M5 14h14M5 20h20M5 26h12M22 30h9v8h-9zM35 27h12" stroke="#bcc8dc" stroke-width="1.500" fill="none"/><path d="M27 18h12v4H27zM4 30h3v4H4zM9 31h3v3H9zM40 32h7v3h-7z" fill="#3f7ee0"/><text x="26" y="49" font-family="Inter" font-size="11" font-weight="500" fill="#777" text-anchor="middle">PDF</text></svg></div>
    <div class="app"><svg width="48" height="58" viewBox="0 0 48 58" style="margin-top:-5px"><path d="M5 12 12 2l7 6 6-5 8 4 6-3 4 8z" fill="#e6e6e6"/><path d="m14 8 4 3M26 6l3 4" stroke="#c46a3a" stroke-width="3"/><path d="M3 12h42l-4 42q-17 6-34 0z" fill="url(#gBin)"/><ellipse cx="24" cy="12" rx="21" ry="3" fill="none" stroke="#b5b9bb" stroke-width="2"/></svg></div>
  </div>
</footer>
</body>
</html>
